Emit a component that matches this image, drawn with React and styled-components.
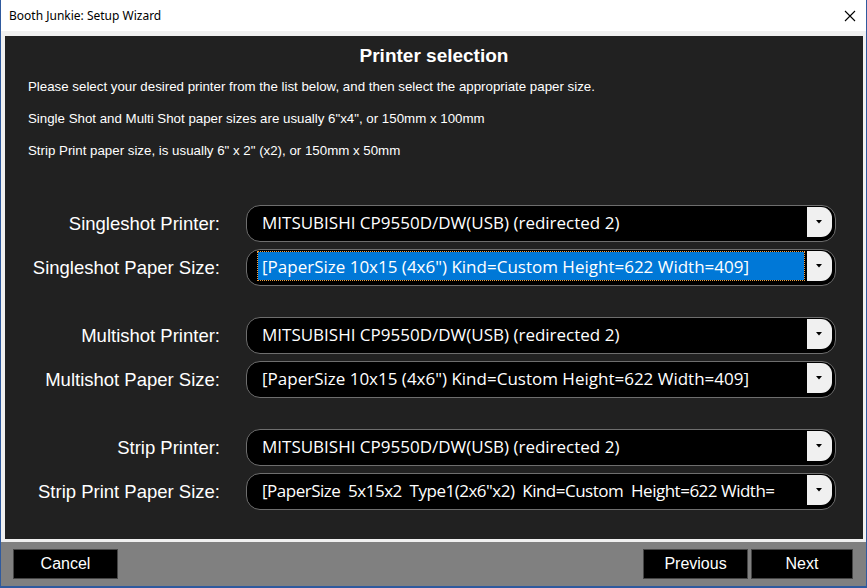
import styled, { createGlobalStyle } from "styled-components";

const GlobalStyle = createGlobalStyle`
  html, body {
    margin: 0;
    padding: 0;
    background: #2f5a9e;
  }
  * {
    box-sizing: border-box;
  }
`;

const groups = [
  {
    rows: [
      { label: "Singleshot Printer:", value: "MITSUBISHI CP9550D/DW(USB) (redirected 2)" },
      {
        label: "Singleshot Paper Size:",
        value: "[PaperSize 10x15 (4x6\") Kind=Custom Height=622 Width=409]",
        selected: true,
      },
    ],
  },
  {
    rows: [
      { label: "Multishot Printer:", value: "MITSUBISHI CP9550D/DW(USB) (redirected 2)" },
      { label: "Multishot Paper Size:", value: "[PaperSize 10x15 (4x6\") Kind=Custom Height=622 Width=409]" },
    ],
  },
  {
    rows: [
      { label: "Strip Printer:", value: "MITSUBISHI CP9550D/DW(USB) (redirected 2)" },
      {
        label: "Strip Print Paper Size:",
        value: "[PaperSize  5x15x2  Type1(2x6\"x2)  Kind=Custom  Height=622 Width=",
        tight: true,
      },
    ],
  },
];

function Combo({ value, selected, tight }) {
  return (
    <ComboBox>
      <ComboText $selected={selected} $tight={tight}>
        {value}
      </ComboText>
      <DropButton>
        <svg width="6" height="4" viewBox="0 0 6 4">
          <path d="M0 0 H6 L3 3.5 Z" fill="#000" />
        </svg>
      </DropButton>
    </ComboBox>
  );
}

function App() {
  return (
    <>
      <GlobalStyle />
      <Window>
        <TitleBar>
          <span>Booth Junkie: Setup Wizard</span>
          <CloseIcon viewBox="0 0 12 12">
            <path d="M1 1 L11 11 M11 1 L1 11" stroke="#000" strokeWidth="1.1" />
          </CloseIcon>
        </TitleBar>
        <Body>
          <Panel>
            <Heading>Printer selection</Heading>
            <Info>Please select your desired printer from the list below, and then select the appropriate paper size.</Info>
            <Info>Single Shot and Multi Shot paper sizes are usually 6"x4", or 150mm x 100mm</Info>
            <Info>Strip Print paper size, is usually 6" x 2" (x2), or 150mm x 50mm</Info>
            <Groups>
              {groups.map((g, i) => (
                <Group key={i}>
                  {g.rows.map((r) => (
                    <Row key={r.label}>
                      <Label>{r.label}</Label>
                      <Combo value={r.value} selected={r.selected} tight={r.tight} />
                    </Row>
                  ))}
                </Group>
              ))}
            </Groups>
          </Panel>
        </Body>
        <Footer>
          <NavButton>Cancel</NavButton>
          <FooterRight>
            <NavButton>Previous</NavButton>
            <NavButton $narrow>Next</NavButton>
          </FooterRight>
        </Footer>
      </Window>
    </>
  );
}

const Window = styled.div`
  width: 865px;
  height: 586px;
  margin-left: 1px;
  display: flex;
  flex-direction: column;
  background: #f0f0f0;
  overflow: hidden;
`;

const TitleBar = styled.div`
  height: 31px;
  flex: none;
  background: #fff;
  display: flex;
  align-items: center;
  justify-content: space-between;
  padding: 0 10px 0 8px;
  font-family: "Noto Sans", "DejaVu Sans", sans-serif;
  font-size: 12px;
  color: #000;
`;

const CloseIcon = styled.svg`
  width: 12px;
  height: 12px;
`;

const Body = styled.div`
  flex: 1;
  padding: 5px 3px 3px 4px;
  display: flex;
  min-height: 0;
`;

const Panel = styled.div`
  flex: 1;
  background: #212121;
  display: flex;
  flex-direction: column;
  padding: 8px 0 0 23px;
  color: #fff;
  font-family: "Liberation Sans", Arial, sans-serif;
`;

const Heading = styled.h1`
  margin: 0 0 3px -23px;
  font-size: 19px;
  font-weight: bold;
  text-align: center;
  line-height: 24px;
`;

const Info = styled.p`
  margin: 0;
  font-size: 13.3px;
  line-height: 32px;
`;

const Groups = styled.div`
  display: flex;
  flex-direction: column;
  gap: 31px;
  margin-top: 38px;
`;

const Group = styled.div`
  display: flex;
  flex-direction: column;
  gap: 7px;
`;

const Row = styled.div`
  display: flex;
  align-items: center;
`;

const Label = styled.div`
  width: 192px;
  text-align: right;
  font-size: 18.5px;
  margin-right: 26px;
  white-space: nowrap;
`;

const ComboBox = styled.div`
  width: 590px;
  height: 37px;
  background: #000;
  border: 1px solid #6e6e6e;
  border-radius: 14px;
  display: flex;
  align-items: center;
  padding: 0 3px 3px 11px;
  overflow: hidden;
`;

const ComboText = styled.div`
  flex: 1;
  min-width: 0;
  height: 28px;
  margin-right: 3px;
  display: flex;
  align-items: center;
  padding-left: 4px;
  white-space: pre;
  overflow: hidden;
  font-family: "Open Sans", "Noto Sans", sans-serif;
  font-size: 17px;
  letter-spacing: ${(p) => (p.$tight ? "-0.5px" : "normal")};
  color: #fff;
  background: ${(p) => (p.$selected ? "#0078d7" : "transparent")};
  outline: ${(p) => (p.$selected ? "1px dotted #f0a040" : "none")};
`;

const DropButton = styled.div`
  width: 25px;
  height: 30px;
  flex: none;
  background: #f0f0f0;
  border-radius: 0 11px 11px 0;
  display: flex;
  align-items: center;
  justify-content: center;
  padding-right: 2px;
`;

const Footer = styled.div`
  height: 44px;
  flex: none;
  background: #808080;
  display: flex;
  justify-content: space-between;
  padding: 7px 13px 0 12px;
`;

const FooterRight = styled.div`
  display: flex;
  gap: 3px;
`;

const NavButton = styled.button`
  width: ${(p) => (p.$narrow ? "102px" : "105px")};
  height: 30px;
  background: #000;
  border: 1px solid #454545;
  color: #fff;
  font-family: "Liberation Sans", Arial, sans-serif;
  font-size: 16px;
  padding: 0;
  cursor: pointer;
`;

export default App;
